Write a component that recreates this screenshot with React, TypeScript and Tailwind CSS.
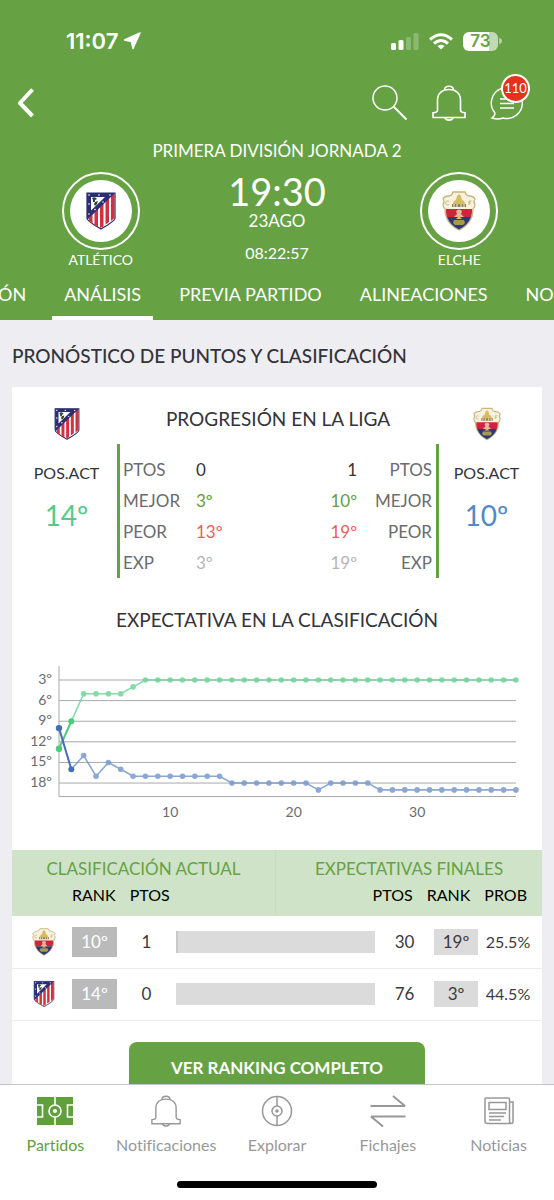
import type { ReactNode } from "react";

const TABS = ["ÓN", "ANÁLISIS", "PREVIA PARTIDO", "ALINEACIONES", "NO"];

const STATS = [
  { label: "PTOS", home: "0", away: "1", color: "text-[#333338]" },
  { label: "MEJOR", home: "3º", away: "10º", color: "text-[#5fa03c]" },
  { label: "PEOR", home: "13º", away: "19º", color: "text-[#e85f5a]" },
  { label: "EXP", home: "3º", away: "19º", color: "text-[#b5b5b8]" },
];

const HOME_RANKS = [13, 9, 5, 5, 5, 5, 4, ...Array(31).fill(3)];
const AWAY_RANKS = [
  10, 16, 14, 17, 15, 16,
  ...Array(8).fill(17),
  ...Array(7).fill(18),
  19,
  ...Array(4).fill(18),
  ...Array(12).fill(19),
];

const STANDINGS = [
  { team: "elche", rank: "10º", points: "1", finalPoints: "30", finalRank: "19º", prob: "25.5%", progress: 1 },
  { team: "atletico", rank: "14º", points: "0", finalPoints: "76", finalRank: "3º", prob: "44.5%", progress: 0 },
];

function AtleticoCrest({ className }: { className: string }) {
  return (
    <svg viewBox="-1 -1 32 40" className={className} aria-label="Atlético" role="img">
      <path d="M1 1h28v25c0 3-7 7-14 11C8 33 1 29 1 26z" fill="#fff" stroke="#2b2c6b" strokeWidth="1.2" />
      <path d="M25 2h3.500v24L25 29zM19.500 8l3.500-4v26l-3.500 2.500zM14 14l3.500-4v24.500L14 36zM8.500 20l3.500-4v18.500L8.500 33zM3 26l3.500-4v9.500L3 29.500z" fill="#d2303c" />
      <path d="M1 1h28L1 28z" fill="#2c2d74" />
      <path d="M5 5h14L5 18.500z" fill="#fff" />
      <path d="M6 6q3-2 5 1l-2 1v2H7V8zM9 10l3-1-1 3-2 2-1-2z" fill="#27472f" />
      <g fill="#fff">
        <circle cx="3" cy="3" r=".8" />
        <circle cx="13" cy="3" r=".8" />
        <circle cx="24" cy="3" r=".8" />
        <circle cx="3" cy="12" r=".8" />
        <circle cx="3" cy="22" r=".8" />
        <circle cx="9" cy="17.500" r=".8" />
        <circle cx="17" cy="10" r=".8" />
      </g>
    </svg>
  );
}

function ElcheCrest({ className }: { className: string }) {
  return (
    <svg viewBox="0 0 34 40" className={className} aria-label="Elche" role="img">
      <path
        d="M11 1h12q1 4 5 4 3 0 5 3-2 3 0 5 0 3-2 5 0 14-14 21Q3 32 3 18q-2-2-2-5 2-2 0-5 2-3 5-3 4 0 5-4z"
        fill="#f7f2df"
        stroke="#c5b57e"
        strokeWidth="1.3"
      />
      <path d="M4 18h26v3q0 2-1 5H5q-1-3-1-5z" fill="#cf2439" />
      <path d="M5 26h24q-3 8-12 12.500Q8 34 5 26z" fill="#2b3a74" />
      <path d="M11 15v-3q1-3 3-3l1-4 2-2 2 2 1 4q2 0 3 3v3z" fill="#d7bd62" />
      <path d="M10 13h14v3H10z" fill="#8b8250" />
      <path d="M12 13v3m3-3v3m4-3v3m3-3v3" stroke="#f7f2df" />
      <path d="M14 20q3-3 6 0l-1 3 3 3H12l3-3z" fill="#e5b99a" />
      <path d="M12 29h10l1 3-2 2h-8l-2-2z" fill="#a59a4d" />
      <path d="M14 28h6l-3-3z" fill="#d9c06a" />
      <path d="M7 10.500a2 2 0 1 0 0 3M27 14v-4h2.500M27 12h2" fill="none" stroke="#c5b57e" />
    </svg>
  );
}

function Crest({ team, className }: { team: string; className: string }) {
  return team === "elche" ? <ElcheCrest className={className} /> : <AtleticoCrest className={className} />;
}

function BellIcon({ className }: { className: string }) {
  return (
    <svg viewBox="0 0 34 36" className={className} fill="none" stroke="currentColor" strokeWidth="1.6" aria-hidden="true">
      <path d="M5.500 25V15C5.500 8 10.500 4.500 17 4.500S28.500 8 28.500 15v10q0 2.500 4.500 2.800v4.700H1v-4.700q4.500-.3 4.500-2.800z" />
      <path d="M12.500 5c0-5 9-5 9 0M13 32.500c1 3.500 7 3.500 8 0" />
    </svg>
  );
}

function StatusBar() {
  return (
    <div className="flex h-[82px] items-center justify-between pl-[66px] pr-[52px]">
      <div className="flex items-center gap-[5px] font-['Inter',sans-serif] text-[22px] font-semibold">
        11:07
        <svg viewBox="0 0 18 18" className="size-[18px]" fill="currentColor" stroke="currentColor" strokeWidth="1.5" strokeLinejoin="round" aria-hidden="true">
          <path d="M17 1 1.500 8l7 1.500L10 16.500z" />
        </svg>
      </div>
      <div className="flex items-center gap-[10px]">
        <svg viewBox="0 0 28 18" className="h-[18px] w-7" fill="currentColor" aria-hidden="true">
          <rect x="0" y="11" width="5" height="7" rx="1.500" />
          <rect x="7.500" y="8" width="5" height="10" rx="1.500" />
          <rect x="15" y="5" width="5" height="13" rx="1.500" opacity=".25" />
          <rect x="22.500" y="1" width="5" height="17" rx="1.500" opacity=".25" />
        </svg>
        <svg viewBox="0 0 24 17" className="h-[17px] w-6" fill="none" stroke="currentColor" strokeWidth="3" aria-hidden="true">
          <path d="M1 6.500Q12-3 23 6.500M5 10.500q7-6 14 0" />
          <path d="M8.500 13q3.500-2.500 7 0L12 16.500z" fill="currentColor" stroke="none" />
        </svg>
        <div className="flex items-center gap-px">
          <div className="flex h-[19px] w-[35px] items-center justify-center rounded-md bg-linear-to-r from-white from-75% to-white/60 to-75% font-['Inter',sans-serif] text-[17px] leading-none font-semibold text-[#66a243]">
            73
          </div>
          <div className="h-[6px] w-[3px] rounded-r-full bg-white/50" />
        </div>
      </div>
    </div>
  );
}

function TeamBadge({ team, name }: { team: string; name: string }) {
  return (
    <div className="flex flex-col items-center pt-[9px]">
      <div className="flex size-[78px] items-center justify-center rounded-full border-2 border-white">
        <div className="flex size-[62px] items-center justify-center rounded-full bg-white">
          <Crest team={team} className="h-10 w-[34px]" />
        </div>
      </div>
      <span className="text-sm leading-5">{name}</span>
    </div>
  );
}

function MatchHeader() {
  return (
    <header className="shrink-0 bg-[#66a243] text-white">
      <StatusBar />
      <div className="flex h-[42px] items-center justify-between pl-4 pr-[30px]">
        <button aria-label="Volver">
          <svg viewBox="0 0 20 30" className="h-[30px] w-5" fill="none" stroke="currentColor" strokeWidth="4" aria-hidden="true">
            <path d="M16.500 1.500 4 15l12.500 13" strokeLinejoin="round" />
          </svg>
        </button>
        <div className="flex items-center gap-6">
          <button aria-label="Buscar">
            <svg viewBox="0 0 36 36" className="size-9" fill="none" stroke="currentColor" strokeWidth="1.500" aria-hidden="true">
              <circle cx="13" cy="13" r="12" />
              <path d="m21.500 21.500 13 13" strokeWidth="2" />
            </svg>
          </button>
          <button aria-label="Avisos">
            <BellIcon className="h-9 w-[34px]" />
          </button>
          <button aria-label="Mensajes" className="relative">
            <svg viewBox="0 0 34 34" className="size-[34px]" fill="none" stroke="currentColor" strokeWidth="1.400" aria-hidden="true">
              <path d="M5 27A15.500 15.500 0 1 1 13 32q-5 2-11 0 3-2 3-5z" />
              <path d="M10 13h14M10 17.500h14M10 22h14" strokeWidth="1.600" />
            </svg>
            <span className="absolute -top-3 -right-[6px] flex size-[29px] items-center justify-center rounded-full border-2 border-white bg-[#e8301f] text-[13px]">
              110
            </span>
          </button>
        </div>
      </div>
      <h1 className="pt-[15px] text-center text-[17px] leading-6">PRIMERA DIVISIÓN JORNADA 2</h1>
      <div className="grid grid-cols-[4fr_3fr_4fr]">
        <TeamBadge team="atletico" name="ATLÉTICO" />
        <div className="flex flex-col items-center pt-[8px]">
          <span className="text-[38px] leading-10">19:30</span>
          <span className="text-[17px] leading-5">23AGO</span>
          <span className="pt-3 text-base leading-5">08:22:57</span>
        </div>
        <div className="pl-3">
          <TeamBadge team="elche" name="ELCHE" />
        </div>
      </div>
      <nav className="flex gap-[14px] overflow-hidden">
        {TABS.map((tab) => (
          <button
            key={tab}
            className={`shrink-0 border-b-4 pt-3 pb-[10px] text-lg leading-6 whitespace-nowrap ${
              tab === "ÓN" ? "-ml-[2px] pr-3" : "px-3"
            } ${tab === "ANÁLISIS" ? "border-white" : "border-transparent"}`}
          >
            {tab}
          </button>
        ))}
      </nav>
    </header>
  );
}

function Position({ team, value, className }: { team: string; value: string; className: string }) {
  return (
    <div className="flex flex-col items-center">
      <Crest team={team} className="h-[34px] w-7" />
      <span className="pt-5 text-base leading-6 text-[#333338]">POS.ACT</span>
      <span className={`pt-3 text-[28px] leading-9 ${className}`}>{value}</span>
    </div>
  );
}

function LeagueProgress() {
  return (
    <section className="grid grid-cols-[105px_1fr_103px] pt-5">
      <div className="pl-1">
        <Position team="atletico" value="14º" className="text-[#54cb88]" />
      </div>
      <div>
        <h3 className="text-center text-[19px] leading-6">PROGRESIÓN EN LA LIGA</h3>
        <div className="mt-[13px] border-x-[3px] border-[#66a243] pt-[10px] pr-1 pl-[3px]">
          <table className="w-full table-fixed text-[17px]">
            <tbody>
              {STATS.map((stat) => (
                <tr key={stat.label} className="h-[31px]">
                  <th scope="row" className="w-[73px] text-left font-normal text-[#6b6b6e]">{stat.label}</th>
                  <td className={stat.color}>{stat.home}</td>
                  <td className={`text-right ${stat.color}`}>{stat.away}</td>
                  <td className="w-[75px] text-right text-[#6b6b6e]">{stat.label}</td>
                </tr>
              ))}
            </tbody>
          </table>
        </div>
      </div>
      <div className="pr-2">
        <Position team="elche" value="10º" className="text-[#5588c6]" />
      </div>
    </section>
  );
}

const chartX = (i: number) => 47 + i * 12.35;
const chartY = (rank: number) => 24 + (rank - 3) * 6.87;

function RankLine({ ranks, color, strong }: { ranks: number[]; color: string; strong: string }) {
  const points = ranks.map((rank, i) => `${chartX(i)},${chartY(rank)}`);
  return (
    <>
      <g opacity=".8">
        <polyline points={points.slice(1).join(" ")} fill="none" stroke={color} strokeWidth="1.6" />
        {ranks.map((rank, i) => (
          <circle key={i} cx={chartX(i)} cy={chartY(rank)} r="2.8" fill={color} />
        ))}
      </g>
      <polyline points={points.slice(0, 2).join(" ")} fill="none" stroke={strong} strokeWidth="2" />
      <circle cx={chartX(0)} cy={chartY(ranks[0])} r="3.2" fill={strong} />
      <circle cx={chartX(1)} cy={chartY(ranks[1])} r="2.9" fill={strong} />
    </>
  );
}

function RankChart() {
  return (
    <svg viewBox="0 0 530 170" className="w-full font-['Lato',sans-serif] text-sm" role="img" aria-label="Expectativa en la clasificación">
      <g stroke="#a9a9ab">
        {[3, 6, 9, 12, 15, 18].map((rank) => (
          <line key={rank} x1="47" x2="504" y1={chartY(rank)} y2={chartY(rank)} />
        ))}
        <path d="M47 10v130.500h457" fill="none" />
      </g>
      <g fill="#6b6b6e">
        {[3, 6, 9, 12, 15, 18].map((rank) => (
          <text key={rank} x="40" y={chartY(rank) + 4} textAnchor="end">{`${rank}º`}</text>
        ))}
        {[10, 20, 30].map((round) => (
          <text key={round} x={chartX(round - 1)} y="161" textAnchor="middle">{round}</text>
        ))}
      </g>
      <RankLine ranks={HOME_RANKS} color="#66d293" strong="#4fc97c" />
      <RankLine ranks={AWAY_RANKS} color="#7093c8" strong="#4470b2" />
    </svg>
  );
}

function StandingsTable() {
  return (
    <table className="w-full table-fixed text-center text-[#3a3a3f]">
      <colgroup>
        <col className="w-[60px]" />
        <col className="w-[45px]" />
        <col className="w-[59px]" />
        <col />
        <col />
        <col className="w-[59px]" />
        <col className="w-[44px]" />
        <col className="w-[64px]" />
      </colgroup>
      <thead className="bg-[#cfe3c9] text-base text-black">
        <tr className="h-[66px]">
          <th colSpan={4} scope="colgroup" className="border-r border-[#c5dcc0] font-normal">
            <div className="text-[17px] leading-6 text-[#66a243]">CLASIFICACIÓN ACTUAL</div>
            <div className="flex gap-[14px] pl-[60px] leading-7">
              <span>RANK</span>
              <span>PTOS</span>
            </div>
          </th>
          <th colSpan={4} scope="colgroup" className="font-normal">
            <div className="text-[17px] leading-6 text-[#66a243]">EXPECTATIVAS FINALES</div>
            <div className="flex justify-end gap-[14px] pr-[15px] leading-7">
              <span>PTOS</span>
              <span>RANK</span>
              <span>PROB</span>
            </div>
          </th>
        </tr>
      </thead>
      <tbody>
        {STANDINGS.map((row) => (
          <tr key={row.team} className="h-[52px] border-b border-[#ececee] text-[17px]">
            <td>
              <Crest team={row.team} className="ml-5 h-7 w-6" />
            </td>
            <td>
              <div className="bg-[#bababa] leading-[30px] text-white">{row.rank}</div>
            </td>
            <td>{row.points}</td>
            <td colSpan={2}>
              <div className="h-[22px] bg-[#dbdbdb]">
                <div className="h-full bg-[#c9c9c9]" style={{ width: `${row.progress}%` }} />
              </div>
            </td>
            <td>{row.finalPoints}</td>
            <td>
              <div className="bg-[#dbdbdb] leading-[26px]">{row.finalRank}</div>
            </td>
            <td className="pr-1 text-base">{row.prob}</td>
          </tr>
        ))}
      </tbody>
    </table>
  );
}

function NavItem({ label, active, children }: { label: string; active?: boolean; children: ReactNode }) {
  return (
    <a href="#" className={`flex flex-col items-center ${active ? "text-[#5fa03c]" : "text-[#98989b]"}`}>
      <span className="flex h-9 items-center">{children}</span>
      <span className="pt-1 text-base leading-6 [font-variant-ligatures:none]">{label}</span>
    </a>
  );
}

function BottomNav() {
  return (
    <footer className="h-[116px] shrink-0 border-t border-[#c4c4c6] bg-white pt-2">
      <nav className="grid grid-cols-5">
        <NavItem label="Partidos" active>
          <svg viewBox="0 0 36 28" className="h-7 w-9" fill="none" stroke="#fff" strokeWidth="1.600" aria-hidden="true">
            <path d="M0 0h36v28H0z" fill="currentColor" stroke="none" />
            <path d="M18 0v8m0 12v8M0 8h5.500v12H0M36 8h-5.500v12H36" />
            <circle cx="18" cy="14" r="6" />
            <circle cx="18" cy="14" r="2" fill="#fff" stroke="none" />
          </svg>
        </NavItem>
        <NavItem label="Notificaciones">
          <BellIcon className="h-8 w-[30px]" />
        </NavItem>
        <NavItem label="Explorar">
          <svg viewBox="0 0 32 32" className="size-8" fill="none" stroke="currentColor" strokeWidth="1.500" aria-hidden="true">
            <circle cx="16" cy="16" r="14.500" />
            <circle cx="16" cy="16" r="5" />
            <circle cx="16" cy="16" r="1.800" fill="currentColor" stroke="none" />
            <path d="M16 1.500V11m0 10v9.500" />
          </svg>
        </NavItem>
        <NavItem label="Fichajes">
          <svg viewBox="0 0 36 32" className="h-8 w-9" fill="none" stroke="currentColor" strokeWidth="2" aria-hidden="true">
            <path d="M.5 11H35L23 1M35.500 21.500H1l12 10" strokeLinejoin="bevel" />
          </svg>
        </NavItem>
        <NavItem label="Noticias">
          <svg viewBox="0 0 30 28" className="h-7 w-[30px]" fill="none" stroke="currentColor" strokeWidth="1.500" aria-hidden="true">
            <path d="M25.500 24V2q0-1-1-1H2Q1 1 1 2v22q0 2.500 2.500 2.500H27q2 0 2-2V5h-3.500v19q0 2.500 2 2.500M5 5.500h17v7H5zM5 16h17M5 19.500h15M5 23h12" />
          </svg>
        </NavItem>
      </nav>
      <div className="mx-auto mt-6 h-[7px] w-[36%] rounded-full bg-black" />
    </footer>
  );
}

export default function App() {
  return (
    <div className="flex h-screen flex-col bg-[#eeedf2] font-['Lato','Noto_Sans',sans-serif] text-[#333338]">
      <MatchHeader />
      <main className="min-h-0 flex-1 overflow-y-auto px-3 [scrollbar-width:none]">
        <h2 className="pt-6 pb-[19px] text-[19px] leading-6 font-medium">PRONÓSTICO DE PUNTOS Y CLASIFICACIÓN</h2>
        <div className="bg-white pb-8">
          <LeagueProgress />
          <section className="pt-[30px]">
            <h3 className="pb-6 text-center text-[19px] leading-6">EXPECTATIVA EN LA CLASIFICACIÓN</h3>
            <RankChart />
          </section>
          <section className="pt-6">
            <StandingsTable />
            <div className="pt-[21px] text-center">
              <button className="w-[56%] rounded-lg bg-[#66a243] py-[14px] text-[17px] leading-6 font-bold text-white">
                VER RANKING COMPLETO
              </button>
            </div>
          </section>
        </div>
      </main>
      <BottomNav />
    </div>
  );
}
